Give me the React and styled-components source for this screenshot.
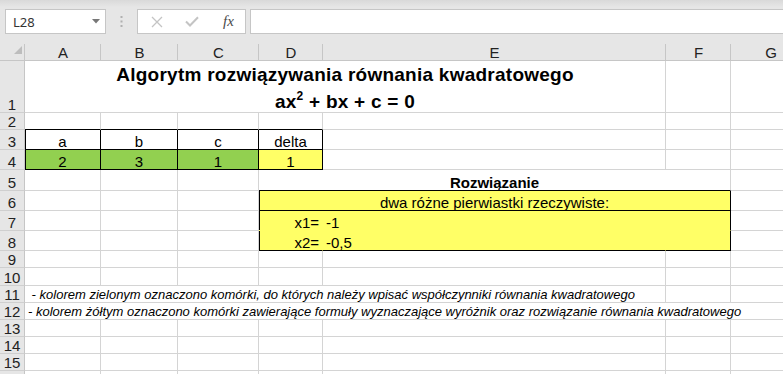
import React from 'react';
import styled, { createGlobalStyle } from 'styled-components';

const GlobalStyle = createGlobalStyle`
  html, body { margin: 0; padding: 0; }
  body {
    font-family: "Liberation Sans", Arial, sans-serif;
    background: #e6e6e6;
  }
`;

const GRID = '#d4d4d4';
const BLACK = '#000';
const GREEN = '#92d050';
const YELLOW = '#ffff66';

const Page = styled.div`
  width: 783px;
  height: 374px;
  overflow: hidden;
  background: #fff;
`;

const FormulaBar = styled.div`
  display: flex;
  align-items: center;
  height: 40px;
  box-sizing: border-box;
  padding: 3px 0 0 5px;
  background: linear-gradient(#d9d9d9, #e6e6e6 7px);
`;

const NameBox = styled.div`
  width: 101px;
  height: 25px;
  box-sizing: border-box;
  border: 1px solid #c6c6c6;
  background: #fff;
  display: flex;
  align-items: center;
  justify-content: space-between;
  padding: 0 5px 0 7px;
  font-family: "Segoe UI", "Noto Sans", sans-serif;
  font-size: 13px;
  color: #333;
`;

const Grip = styled.div`
  width: 31px;
  display: flex;
  justify-content: center;
`;

const FxGroup = styled.div`
  width: 109px;
  height: 25px;
  box-sizing: border-box;
  border: 1px solid #c6c6c6;
  background: #fff;
  display: flex;
  align-items: center;
  padding-left: 13px;
  gap: 22px;
`;

const FxLabel = styled.span`
  font-family: "Liberation Serif", "Times New Roman", serif;
  font-style: italic;
  font-size: 15px;
  color: #4a4a4a;
  margin-left: 2px;
`;

const FormulaInput = styled.div`
  flex: 1;
  height: 25px;
  box-sizing: border-box;
  margin-left: 4px;
  border: 1px solid #c6c6c6;
  border-right: none;
  background: #fff;
`;

const Sheet = styled.div`
  display: grid;
  grid-template-columns: 25px 76px 77px 81px 64px 343px 65px 80px;
  grid-template-rows: 21px 52px 17px 20px 20px 21px 20px 20px 20px 17px 18px 17px 17px 17px 17px 17px 20px;
  width: 808px;
`;

const ColHead = styled.div`
  background: #e6e6e6;
  border-bottom: 1px solid #c6c6c6;
  display: flex;
  align-items: flex-end;
  justify-content: center;
  font-size: 15px;
  line-height: 15px;
  color: #222;
  position: relative;
  &::after {
    content: '';
    position: absolute;
    right: 0;
    top: 4px;
    bottom: 0;
    width: 1px;
    background: ${p => (p.$last ? 'transparent' : '#c6c6c6')};
  }
`;

const Corner = styled(ColHead)`
  align-items: center;
  justify-content: flex-end;
  padding-right: 3px;
`;

const RowHead = styled.div`
  background: #e6e6e6;
  border-right: 1px solid #c6c6c6;
  border-bottom: 1px solid #cfcfcf;
  display: flex;
  align-items: flex-end;
  justify-content: center;
  font-size: 15px;
  line-height: 15px;
  color: #222;
`;

const Cell = styled.div`
  grid-column: span ${p => p.$span || 1};
  display: flex;
  align-items: flex-end;
  justify-content: ${p => (p.$align === 'center' ? 'center' : p.$align === 'right' ? 'flex-end' : 'flex-start')};
  padding: 0 3px;
  background: ${p => p.$bg || '#fff'};
  border-right: 1px solid ${p => p.$r || GRID};
  border-bottom: 1px solid ${p => p.$b || GRID};
  box-shadow: ${p => (p.$l ? `inset 1px 0 0 ${BLACK}` : 'none')};
  font-size: 15px;
  line-height: 15px;
  font-weight: ${p => (p.$bold ? 700 : 400)};
  color: #000;
  white-space: nowrap;
`;

const Title = styled.div`
  grid-column: span 5;
  border-right: 1px solid ${GRID};
  border-bottom: 1px solid ${GRID};
  display: flex;
  flex-direction: column;
  justify-content: flex-end;
  align-items: center;
  gap: 6px;
  font-size: 19px;
  line-height: 21px;
  font-weight: 700;
  letter-spacing: 0.25px;
  white-space: nowrap;
  sup {
    font-size: 12px;
    line-height: 0;
    vertical-align: 8px;
  }
`;

const Note = styled(Cell)`
  font-size: 13px;
  font-style: italic;
  line-height: 15px;
  white-space: pre;
`;

const Triangle = () => (
  <svg width="8" height="8" viewBox="0 0 8 8">
    <polygon points="8,0 8,8 0,8" fill="#bdbdbd" />
  </svg>
);

const columns = ['A', 'B', 'C', 'D', 'E', 'F', 'G'];

const Empty = ({ n }) => Array.from({ length: n }, (_, i) => <Cell key={i} />);

export default function App() {
  return (
    <>
      <GlobalStyle />
      <Page>
        <FormulaBar>
          <NameBox>
            <span>L28</span>
            <svg width="8" height="5" viewBox="0 0 8 5">
              <polygon points="0,0 8,0 4,4.5" fill="#777" />
            </svg>
          </NameBox>
          <Grip>
            <svg width="3" height="11" viewBox="0 0 3 11">
              <rect x="0.5" y="0" width="2" height="2" fill="#b0b0b0" />
              <rect x="0.5" y="4.5" width="2" height="2" fill="#b0b0b0" />
              <rect x="0.5" y="9" width="2" height="2" fill="#b0b0b0" />
            </svg>
          </Grip>
          <FxGroup>
            <svg width="12" height="12" viewBox="0 0 12 12">
              <path d="M1 1 L11 11 M11 1 L1 11" stroke="#c4c4c4" strokeWidth="1.3" fill="none" />
            </svg>
            <svg width="14" height="11" viewBox="0 0 14 11">
              <path d="M1 5.5 L5 9.5 L13 1.2" stroke="#c4c4c4" strokeWidth="2" fill="none" />
            </svg>
            <FxLabel>fx</FxLabel>
          </FxGroup>
          <FormulaInput />
        </FormulaBar>

        <Sheet>
          <Corner><Triangle /></Corner>
          {columns.map((c, i) => (
            <ColHead key={c} $last={i === columns.length - 1}>{c}</ColHead>
          ))}

          <RowHead>1</RowHead>
          <Title>
            <div>Algorytm rozwiązywania równania kwadratowego</div>
            <div>ax<sup>2</sup> + bx + c = 0</div>
          </Title>
          <Empty n={2} />

          <RowHead>2</RowHead>
          <Cell $b={BLACK} /><Cell $b={BLACK} /><Cell $b={BLACK} /><Cell $b={BLACK} />
          <Empty n={3} />

          <RowHead>3</RowHead>
          <Cell $l $align="center" $r={BLACK} $b={BLACK}>a</Cell>
          <Cell $align="center" $r={BLACK} $b={BLACK}>b</Cell>
          <Cell $align="center" $r={BLACK} $b={BLACK}>c</Cell>
          <Cell $align="center" $r={BLACK} $b={BLACK}>delta</Cell>
          <Empty n={3} />

          <RowHead>4</RowHead>
          <Cell $l $align="center" $bg={GREEN} $r={BLACK} $b={BLACK}>2</Cell>
          <Cell $align="center" $bg={GREEN} $r={BLACK} $b={BLACK}>3</Cell>
          <Cell $align="center" $bg={GREEN} $r={BLACK} $b={BLACK}>1</Cell>
          <Cell $align="center" $bg={YELLOW} $r={BLACK} $b={BLACK}>1</Cell>
          <Empty n={3} />

          <RowHead>5</RowHead>
          <Empty n={3} />
          <Cell $span={3} $align="center" $bold $b={BLACK}>Rozwiązanie</Cell>
          <Cell />

          <RowHead>6</RowHead>
          <Empty n={3} />
          <Cell $span={3} $l $align="center" $bg={YELLOW} $r={BLACK} $b={BLACK}>
            dwa różne pierwiastki rzeczywiste:
          </Cell>
          <Cell />

          <RowHead>7</RowHead>
          <Empty n={3} />
          <Cell $l $align="right" $bg={YELLOW} $r={YELLOW} $b={YELLOW}>x1=</Cell>
          <Cell $bg={YELLOW} $r={YELLOW} $b={YELLOW}>-1</Cell>
          <Cell $bg={YELLOW} $r={BLACK} $b={YELLOW} />
          <Cell />

          <RowHead>8</RowHead>
          <Empty n={3} />
          <Cell $l $align="right" $bg={YELLOW} $r={YELLOW} $b={BLACK}>x2=</Cell>
          <Cell $bg={YELLOW} $r={YELLOW} $b={BLACK}>-0,5</Cell>
          <Cell $bg={YELLOW} $r={BLACK} $b={BLACK} />
          <Cell />

          <RowHead>9</RowHead>
          <Empty n={7} />

          <RowHead>10</RowHead>
          <Empty n={7} />

          <RowHead>11</RowHead>
          <Note $span={5}>{' - kolorem zielonym oznaczono komórki, do których należy wpisać współczynniki równania kwadratowego'}</Note>
          <Empty n={2} />

          <RowHead>12</RowHead>
          <Note $span={7}>{'- kolorem żółtym oznaczono komórki zawierające formuły wyznaczające wyróżnik oraz rozwiązanie równania kwadratowego'}</Note>

          {[13, 14, 15].map(r => (
            <React.Fragment key={r}>
              <RowHead>{r}</RowHead>
              <Empty n={7} />
            </React.Fragment>
          ))}
          <RowHead />
          <Empty n={7} />
        </Sheet>
      </Page>
    </>
  );
}
